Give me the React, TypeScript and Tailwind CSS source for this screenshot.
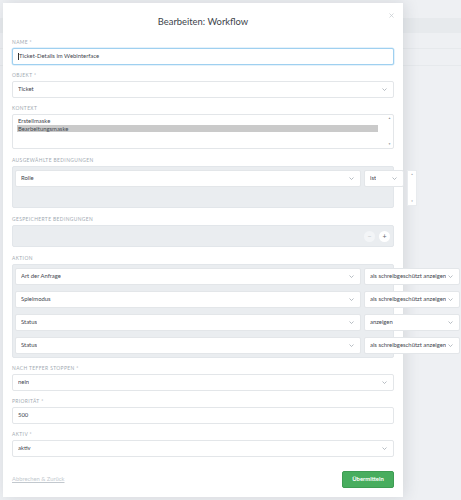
import React from 'react';
import clsx from 'clsx';

const Chevron = () => (
  <svg width="5" height="3" viewBox="0 0 5 3" className="shrink-0">
    <path d="M0.5 0.5 L2.5 2.5 L4.5 0.5" fill="none" stroke="#9aa2aa" strokeWidth="0.7" />
  </svg>
);

const Label = ({ children }: { children: React.ReactNode }) => (
  <div className="flex h-[11px] items-center text-[4.9px] uppercase tracking-[0.08em] text-[#a2aab2]">
    {children}
  </div>
);

interface SelectProps {
  value: string;
  className?: string;
}

const Select: React.FC<SelectProps> = ({ value, className }) => (
  <div
    className={clsx(
      'flex h-[17px] shrink-0 items-center justify-between rounded-[2px] border border-[#e3e6e9] bg-white pl-[5px] pr-[6px] text-[5.9px] text-[#3f474f]',
      className
    )}
  >
    <span className="truncate">{value}</span>
    <Chevron />
  </div>
);

const Input = ({ value, focused = false }: { value: string; focused?: boolean }) => (
  <div
    className={clsx(
      'flex h-[17px] items-center rounded-[2px] border bg-white pl-[5px] text-[5.9px] text-[#3f474f]',
      focused ? 'border-[#9fd0f0] shadow-[0_0_0_0.5px_#cbe6f7]' : 'border-[#e3e6e9]'
    )}
  >
    {focused && <span className="mr-[0.5px] h-[7px] w-[0.6px] bg-[#333]" />}
    {value}
  </div>
);

const aktionen = [
  { field: 'Art der Anfrage', op: 'als schreibgeschützt anzeigen' },
  { field: 'Spielmodus', op: 'als schreibgeschützt anzeigen' },
  { field: 'Status', op: 'anzeigen' },
  { field: 'Status', op: 'als schreibgeschützt anzeigen' },
];

export default function App() {
  return (
    <div className="relative h-[500px] w-[461px] overflow-hidden bg-[#eef0f3] font-['Lato','Noto_Sans',sans-serif]">
      {/* page behind the modal */}
      <div className="pt-[18px]">
        <div className="h-[15px] bg-[#e7eaed]" />
        <div className="mt-[15px] h-[1px] bg-[#e6e9ec]" />
        <div className="mt-[16px] h-[1px] bg-[#e6e9ec]" />
      </div>

      {/* modal */}
      <div className="absolute left-[3px] top-[3px] flex h-[494px] w-[400px] flex-col bg-white px-[9px] shadow-[2px_0_14px_rgba(40,50,60,0.13)]">
        <div className="relative flex h-[34px] items-center justify-center pt-[4px] text-[9.4px] text-[#3d444b]">
          Bearbeiten: Workflow
          <svg width="5" height="5" viewBox="0 0 5 5" className="absolute right-[0px] top-[10px]">
            <path d="M0.5 0.5 L4.5 4.5 M4.5 0.5 L0.5 4.5" stroke="#c3c8cd" strokeWidth="0.7" />
          </svg>
        </div>

        <Label>Name *</Label>
        <Input value="Ticket-Details im Webinterface" focused />

        <div className="mt-[5px]">
          <Label>Objekt *</Label>
          <Select value="Ticket" />
        </div>

        <div className="mt-[5px]">
          <Label>Kontext</Label>
          <div className="flex h-[35px] rounded-[2px] border border-[#e3e6e9] bg-white text-[5.9px] leading-[7.5px] text-[#3f474f]">
            <div className="flex-1 pl-[4px] pr-[8px] pt-[2px]">
              <div className="pl-[1px]">Erstellmaske</div>
              <div className="bg-[#cacaca] pl-[1px]">Bearbeitungsmaske</div>
            </div>
            <div className="flex w-[7px] flex-col items-center justify-between py-[2px] text-[3px] leading-none text-[#8f969c]">
              <span>▲</span>
              <span>▼</span>
            </div>
          </div>
        </div>

        <div className="mt-[6px]">
          <Label>Ausgewählte Bedingungen</Label>
          <div className="h-[42px] rounded-[2px] border border-[#e2e6ea] bg-[#eaedf0] pl-[2px] pt-[3px]">
            <div className="flex items-start gap-[3px]">
              <Select value="Rolle" className="w-[346px]" />
              <Select value="ist" className="w-[40px] pl-[4px] pr-[4px]" />
              <div className="flex h-[36px] w-[10px] shrink-0 flex-col items-center justify-between border border-[#e8ebee] bg-white py-[2px] text-[2.6px] leading-none text-[#9aa1a7]">
                <span>▲</span>
                <span>▼</span>
              </div>
            </div>
          </div>
        </div>

        <div className="mt-[6px]">
          <Label>Gespeicherte Bedingungen</Label>
          <div className="flex h-[22px] items-center justify-end gap-[4px] rounded-[2px] border border-[#e2e6ea] bg-[#eaedf0] pr-[3px]">
            <div className="flex h-[11px] w-[11px] items-center justify-center rounded-full bg-[#f3f5f7] text-[7px] leading-none text-[#c5cace]">
              −
            </div>
            <div className="flex h-[11px] w-[11px] items-center justify-center rounded-full bg-white text-[7px] leading-none text-[#5b636b]">
              +
            </div>
          </div>
        </div>

        <div className="mt-[6px]">
          <Label>Aktion</Label>
          <div className="rounded-[2px] border border-[#e2e6ea] bg-[#eaedf0]">
            {aktionen.map((a, i) => (
              <div key={i} className="flex gap-[3px] py-[3px] pl-[2px]">
                <Select value={a.field} className="w-[346px]" />
                <Select value={a.op} className="w-[96px] pl-[4px] pr-[5px]" />
              </div>
            ))}
          </div>
        </div>

        <div className="mt-[5px]">
          <Label>Nach Teffer stoppen *</Label>
          <Select value="nein" />
        </div>

        <div className="mt-[5px]">
          <Label>Priorität *</Label>
          <Input value="500" />
        </div>

        <div className="mt-[5px]">
          <Label>Aktiv *</Label>
          <Select value="aktiv" />
        </div>

        <div className="mt-[14px] flex h-[17px] items-center justify-between">
          <span className="text-[5.8px] text-[#c2c8ce] underline">Abbrechen &amp; Zurück</span>
          <div className="flex h-[17px] w-[52px] items-center justify-center rounded-[2px] border border-[#3e9c53] bg-[#48ad5e] text-[5.9px] font-bold text-white">
            Übermitteln
          </div>
        </div>
      </div>
    </div>
  );
}
